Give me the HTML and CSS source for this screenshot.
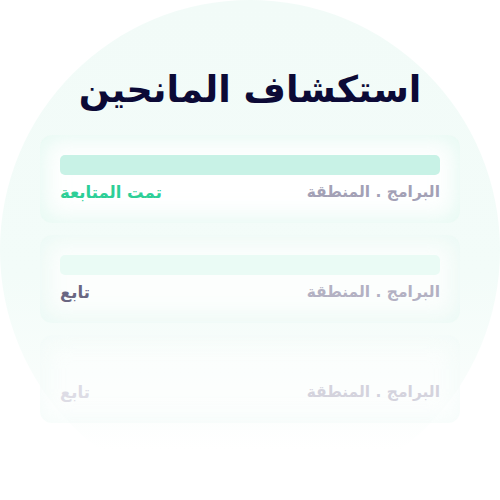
FILE: index.html
```html
<!DOCTYPE html>
<html lang="ar" dir="rtl">
<head>
<meta charset="utf-8">
<link rel="stylesheet" href="styles.css">
</head>
<body>
<div class="stage">
  <h1 class="title">استكشاف المانحين</h1>
  <div class="list">
    <div class="card card-1">
      <div class="bar"></div>
      <div class="row">
        <span class="meta">البرامج . المنطقة</span>
        <span class="action followed">تمت المتابعة</span>
      </div>
    </div>
    <div class="card card-2">
      <div class="bar"></div>
      <div class="row">
        <span class="meta">البرامج . المنطقة</span>
        <span class="action follow">تابع</span>
      </div>
    </div>
    <div class="card card-3">
      <div class="bar"></div>
      <div class="row">
        <span class="meta">البرامج . المنطقة</span>
        <span class="action follow">تابع</span>
      </div>
    </div>
  </div>
</div>
</body>
</html>
```

FILE: styles.css
```css
html, body {
  margin: 0;
  padding: 0;
  background: #ffffff;
}
body {
  width: 500px;
  height: 500px;
  overflow: hidden;
  font-family: "DejaVu Sans", "Noto Sans", sans-serif;
}
.stage {
  width: 500px;
  height: 500px;
  border-radius: 50%;
  background: linear-gradient(to bottom, #f2fbf8 0%, #f3fcf9 55%, #f8fdfb 75%, #ffffff 90%);
  display: flex;
  flex-direction: column;
  align-items: stretch;
  box-sizing: border-box;
  padding-top: 67px;
}
.title {
  margin: 0;
  text-align: center;
  font-size: 36.5px;
  line-height: 46px;
  font-weight: 700;
  color: #0c0a36;
}
.list {
  margin-top: 22px;
  display: flex;
  flex-direction: column;
  gap: 12px;
  padding: 0 40px;
}
.card {
  height: 88px;
  box-sizing: border-box;
  padding: 20px 20px 0;
  border-radius: 12px;
  background: #ffffff;
  box-shadow: inset 0 0 24px 4px rgba(212, 245, 234, 0.6);
}
.bar {
  height: 20px;
  border-radius: 5px;
  background: #c8f2e6;
}
.row {
  display: flex;
  justify-content: space-between;
  align-items: center;
  margin-top: 5px;
  height: 24px;
  font-weight: 700;
}
.meta {
  font-size: 15.5px;
  color: #a3a1b6;
}
.action {
  font-size: 16.5px;
}
.followed {
  color: #2dcf97;
}
.follow {
  color: #6a6782;
}
.card-2 {
  background: #fcfefd;
  box-shadow: inset 0 0 24px 4px rgba(222, 247, 239, 0.6);
}
.card-2 .bar {
  background: #eafbf5;
}
.card-2 .meta {
  color: #b3b1c3;
}
.card-3 {
  background: rgba(255, 255, 255, 0.45);
  box-shadow: inset 0 0 24px 4px rgba(232, 248, 243, 0.45);
}
.card-3 .bar {
  background: transparent;
}
.card-3 .meta {
  color: #d4d3dd;
}
.card-3 .follow {
  color: #dddce5;
}
```
